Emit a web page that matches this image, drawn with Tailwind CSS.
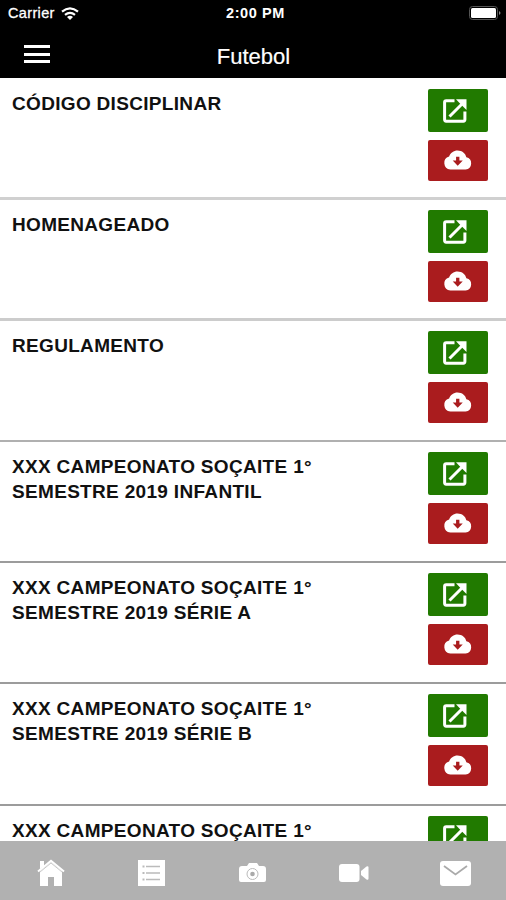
<!DOCTYPE html>
<html lang="pt-BR">
<head>
<meta charset="utf-8">
<title>Futebol</title>
<script src="https://cdn.jsdelivr.net/npm/@tailwindcss/browser@4"></script>
</head>
<body class="w-[506px] h-[900px] overflow-hidden bg-white font-['Liberation_Sans',sans-serif] flex flex-col">
<svg class="hidden">
  <symbol id="open" viewBox="0 0 24 24"><path fill="none" stroke="#fff" stroke-width="3" stroke-linejoin="round" d="M11.500 1.800H3.200Q1.600 1.800 1.600 3.400V20.600Q1.600 22.200 3.200 22.200H20.300Q21.900 22.200 21.900 20.600V12.500M6.500 17.500 20 4"/><path fill="#fff" d="M13 .3H23.500V11L20 7.500 16.500 4Z"/></symbol>
  <symbol id="cloud" viewBox="0 0 30 21"><path fill="#fff" fill-rule="evenodd" d="M7.500 20.500A7 7 0 0 1 6.200 6.800C7.500 3 11 .5 15 .5c4.800 0 8.500 3 9.300 7.200A6.500 6.500 0 0 1 23.500 20.500ZM13.500 7v4H10l5.200 5.500L20.500 11H17V7Z"/></symbol>
</svg>
<header class="h-[78px] shrink-0 bg-black text-white">
  <div class="grid grid-cols-3 items-center h-[27px] px-2">
    <div class="flex items-center gap-[6px]">
      <span class="text-[14.5px] tracking-[0.35px] [-webkit-text-stroke:0.3px_white]">Carrier</span>
      <svg class="w-[18px] h-[13px]" viewBox="0 0 18 13" fill="none" stroke="#fff" stroke-width="2.200"><path d="M1 4.600Q9-2 17 4.600M4 7.900Q9 3.800 14 7.900"/><path fill="#fff" stroke="none" d="M6 10Q9 7.500 12 10L9 13Z"/></svg>
    </div>
    <span class="text-center text-[14.5px] font-bold tracking-[0.6px] pl-[5px] pt-px whitespace-nowrap">2:00 PM</span>
    <svg class="justify-self-end w-[33px] h-[14px] -mr-1 -mt-px" viewBox="0 0 33 14"><rect x=".5" y=".5" width="28" height="13" rx="3" fill="none" stroke="#555"/><rect x="2" y="2" width="25" height="10" rx="1.500" fill="#fff"/><path d="M30 5q3 2 0 4z" fill="#888"/></svg>
  </div>
  <div class="grid grid-cols-3 items-center h-[51px] px-6">
    <div class="flex flex-col gap-[4.5px] w-[26px] mt-[3px]">
      <i class="h-[3px] bg-white"></i><i class="h-[3px] bg-white"></i><i class="h-[3px] bg-white"></i>
    </div>
    <h1 class="text-center text-[22px] leading-[28px] pt-[8px] pl-px [-webkit-text-stroke:0.2px_white]">Futebol</h1>
  </div>
</header>
<main id="list" class="flex-1 min-h-0 overflow-hidden pt-px"></main>
<nav class="h-[59px] shrink-0 bg-[#b1b1b1] grid grid-cols-5 items-center justify-items-center pt-[5px]">
  <svg class="w-[28px] h-[28px]" viewBox="0 0 28 28"><path fill="#fff" d="M3 12 14 3l11 9v15h-8v-9h-6v9H3Z"/><path fill="none" stroke="#fff" stroke-width="2" d="M1 12.500 14 1.800 27 12.500"/><path fill="#fff" d="M3 2h4v5L3 10Z"/><path fill="none" stroke="#bbb" stroke-width=".8" d="M3 13 14 4 25 13"/></svg>
  <svg class="w-[27px] h-[28px]" viewBox="0 0 27 28"><path fill="#fff" d="M0 1h27v26H0Z"/><path stroke="#bbb" stroke-width="1.300" d="M8 7.500h14M8 14h14M8 20.500h14"/><path stroke="#bbb" stroke-width="2" d="M4.500 7.500h2M4.500 14h2M4.500 20.500h2"/></svg>
  <svg class="w-[27px] h-[22px]" viewBox="0 0 27 22"><path fill="#fff" d="M3 4h5l2-3h8l2 3h4q3 0 3 3v11q0 2-2 2H2q-2 0-2-2V7q0-3 3-3Z"/><circle cx="13.500" cy="12" r="5.500" fill="none" stroke="#bbb"/><circle cx="13.500" cy="12" r="2.300" fill="#aaa"/></svg>
  <svg class="w-[30px] h-[20px]" viewBox="0 0 30 20"><rect y="1" width="20.500" height="18" rx="3" fill="#fff"/><path fill="#fff" d="m22 8 5.500-4.500q2-1 2 1v11q0 2-2 1L22 12Z"/></svg>
  <svg class="w-[31px] h-[25px]" viewBox="0 0 31 25"><rect width="31" height="25" rx="3" fill="#fff"/><path fill="none" stroke="#aaa" stroke-width="1.800" d="m4 5 11.500 8.500L27 5"/></svg>
</nav>
<script>
const rows = [
  ['CÓDIGO DISCIPLINAR', 'border-b-3 border-[#d0d0d0]'],
  ['HOMENAGEADO', 'border-b-3 border-[#cccccc]'],
  ['REGULAMENTO', 'border-b-2 border-[#b0b0b0]'],
  ['XXX CAMPEONATO SOÇAITE 1°<br>SEMESTRE 2019 INFANTIL', 'border-b-2 border-[#9c9c9c]'],
  ['XXX CAMPEONATO SOÇAITE 1°<br>SEMESTRE 2019 SÉRIE A', 'border-b-2 border-[#9c9c9c]'],
  ['XXX CAMPEONATO SOÇAITE 1°<br>SEMESTRE 2019 SÉRIE B', 'border-b-2 border-[#9c9c9c]'],
  ['XXX CAMPEONATO SOÇAITE 1°', 'border-b-2 border-[#9c9c9c]']
];
document.getElementById('list').innerHTML = rows.map(([title, line]) => `
  <article class="h-[121.1px] ${line} flex justify-between items-start pl-[12px] pr-[18px] pt-[10px]">
    <h2 class="pt-[3px] text-[19px] leading-[24.5px] tracking-[0.32px] font-bold text-[#111] whitespace-nowrap">${title}</h2>
    <div class="flex flex-col gap-[8px] w-[60px]">
      <button class="h-[43px] rounded-[2px] bg-[#217a00] flex items-center pl-[15px]"><svg class="w-[24px] h-[24px]"><use href="#open"/></svg></button>
      <button class="h-[41px] rounded-[2px] bg-[#aa1c1e] flex items-center pl-[15px] pb-[2px]"><svg class="w-[29px] h-[20px]"><use href="#cloud"/></svg></button>
    </div>
  </article>`).join('');
</script>
</body>
</html>
